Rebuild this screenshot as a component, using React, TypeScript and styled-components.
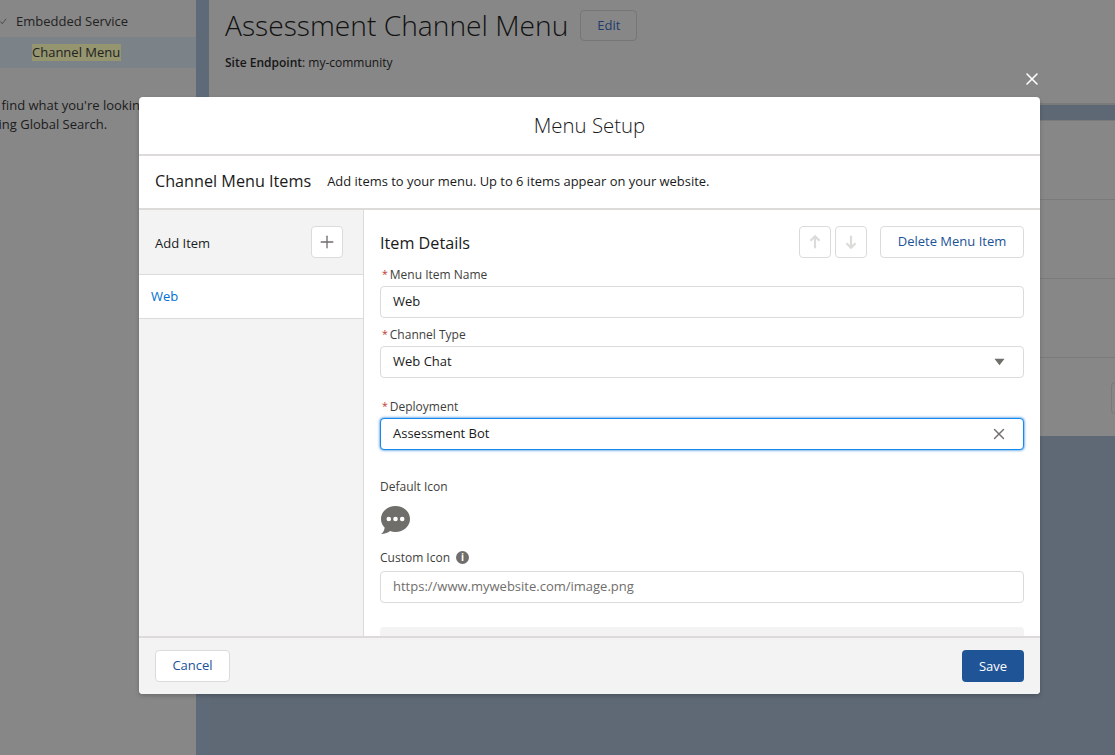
import React from 'react';
import styled, { createGlobalStyle } from 'styled-components';
import { X, Plus } from 'lucide-react';

const GlobalStyle = createGlobalStyle`
  html, body {
    margin: 0;
    padding: 0;
    height: 100%;
    overflow: hidden;
    font-family: "Open Sans", "Noto Sans", "Liberation Sans", sans-serif;
  }
`;

const App = () => {
  return (
    <Page>
      <GlobalStyle />
      <Sidebar>
        <TreeRow>
          <Chevron viewBox="0 0 8 8">
            <path d="M0.5 4 L2.5 6.5 L7 1" fill="none" stroke="#333" strokeWidth="0.8" />
          </Chevron>
          Embedded Service
        </TreeRow>
        <TreeRowActive>
          <Highlight>Channel Menu</Highlight>
        </TreeRowActive>
        <SearchHint>
          Didn't find what you're looking for?
          <br />
          Try using Global Search.
        </SearchHint>
      </Sidebar>
      <Gutter />
      <Main>
        <MainHeader>
          <TitleRow>
            <Title>Assessment Channel Menu</Title>
            <EditButton>Edit</EditButton>
          </TitleRow>
          <Endpoint>
            <strong>Site Endpoint</strong>: my-community
          </Endpoint>
        </MainHeader>
        <Band />
        <BgRow />
        <BgRow />
        <BgRow />
        <BgRow $last>
          <GhostButton />
        </BgRow>
      </Main>

      <CloseButton aria-label="Close">
        <X size={20} strokeWidth={1.9} />
      </CloseButton>

      <Modal>
        <ModalHeader>Menu Setup</ModalHeader>
        <SubHeader>
          <SubTitle>Channel Menu Items</SubTitle>
          <SubText>Add items to your menu. Up to 6 items appear on your website.</SubText>
        </SubHeader>
        <ModalBody>
          <ItemList>
            <AddRow>
              <AddLabel>Add Item</AddLabel>
              <IconButton>
                <Plus size={20} color="#706e6b" strokeWidth={1.6} />
              </IconButton>
            </AddRow>
            <ItemRow>Web</ItemRow>
          </ItemList>
          <Details>
            <DetailsHead>
              <DetailsTitle>Item Details</DetailsTitle>
              <ArrowGroup>
                <IconButton disabled>
                  <Arrow viewBox="0 0 14 14">
                    <path d="M7 12.5 V2 M3 6 L7 2 L11 6" />
                  </Arrow>
                </IconButton>
                <IconButton disabled>
                  <Arrow viewBox="0 0 14 14">
                    <path d="M7 1.5 V12 M3 8 L7 12 L11 8" />
                  </Arrow>
                </IconButton>
              </ArrowGroup>
              <DeleteButton>Delete Menu Item</DeleteButton>
            </DetailsHead>

            <Field $top={6}>
              <Label>
                <Req>*</Req>Menu Item Name
              </Label>
              <InputBox>Web</InputBox>
            </Field>
            <Field $top={6}>
              <Label>
                <Req>*</Req>Channel Type
              </Label>
              <InputBox>
                Web Chat
                <Caret viewBox="0 0 12 8">
                  <path d="M0.5 0.5 H11.5 L6 7.5 Z" fill="#706e6b" />
                </Caret>
              </InputBox>
            </Field>
            <Field $top={18}>
              <Label>
                <Req>*</Req>Deployment
              </Label>
              <InputBox $focus>
                Assessment Bot
                <ClearIcon size={18} color="#706e6b" strokeWidth={1.9} />
              </InputBox>
            </Field>

            <Field $top={26}>
              <Label>Default Icon</Label>
              <ChatIcon viewBox="0 0 31 30">
                <path
                  d="M15.5 1 C7.5 1 1 6.8 1 14 C1 17.3 2.4 20.3 4.6 22.6 C4.6 25 3.4 27.6 1 29 C5 29 8 27.8 10 26.1 C11.7 26.7 13.6 27 15.5 27 C23.5 27 30 21.2 30 14 C30 6.8 23.5 1 15.5 1 Z"
                  fill="#706e6b"
                />
                <circle cx="8.8" cy="14" r="2.3" fill="#fff" />
                <circle cx="15.5" cy="14" r="2.3" fill="#fff" />
                <circle cx="22.2" cy="14" r="2.3" fill="#fff" />
              </ChatIcon>
            </Field>
            <Field $top={12}>
              <IconLabel>
                Custom Icon
                <InfoBadge>i</InfoBadge>
              </IconLabel>
              <InputBox $placeholder>https://www.mywebsite.com/image.png</InputBox>
            </Field>
            <GrayPanel />
          </Details>
        </ModalBody>
        <ModalFooter>
          <CancelButton>Cancel</CancelButton>
          <SaveButton>Save</SaveButton>
        </ModalFooter>
      </Modal>
    </Page>
  );
};

const Page = styled.div`
  position: relative;
  width: 1115px;
  height: 755px;
  display: flex;
  overflow: hidden;
  background: #5f6875;
  color: #1c1c1c;
  font-size: 13px;
`;

const Sidebar = styled.div`
  width: 196px;
  flex: none;
  padding-top: 7px;
  background: #878787;
  overflow: hidden;
`;

const TreeRow = styled.div`
  height: 30px;
  padding-bottom: 2px;
  box-sizing: border-box;
  display: flex;
  align-items: center;
  padding-left: 16px;
  position: relative;
  color: #222;
`;

const Chevron = styled.svg`
  position: absolute;
  left: 0;
  top: 11px;
  width: 7px;
  height: 7px;
`;

const TreeRowActive = styled.div`
  height: 31px;
  display: flex;
  align-items: center;
  padding-left: 32px;
  background: #7b8389;
  color: #222;
`;

const Highlight = styled.span`
  background: #95956f;
  padding-right: 1px;
  line-height: 17px;
`;

const SearchHint = styled.p`
  margin: 28px 0 0 -38px;
  width: 260px;
  line-height: 19px;
  color: #1c1c1c;
`;

const Gutter = styled.div`
  width: 13px;
  flex: none;
  background: #5f6a78;
`;

const Main = styled.div`
  flex: 1;
  min-width: 0;
`;

const MainHeader = styled.div`
  height: 105px;
  padding: 10px 0 0 16px;
  box-sizing: border-box;
  background: #878787;
  border-bottom: 2px solid #7a7a7a;
`;

const TitleRow = styled.div`
  display: flex;
  align-items: center;
  gap: 12px;
  height: 31px;
`;

const Title = styled.h1`
  margin: -2px 0 0;
  font-size: 28.2px;
  font-weight: 300;
  color: #111;
  white-space: nowrap;
`;

const EditButton = styled.div`
  width: 57px;
  height: 31px;
  box-sizing: border-box;
  display: flex;
  align-items: center;
  justify-content: center;
  padding-bottom: 2px;
  border: 1px solid #767676;
  border-radius: 4px;
  color: #1d3d6b;
  background: #878787;
`;

const Endpoint = styled.div`
  margin-top: 13px;
  font-size: 12px;
  color: #161616;
  strong {
    font-weight: 600;
  }
`;

const Band = styled.div`
  height: 15px;
  background: #5e6874;
  border-bottom: 1px solid #7a7a7a;
`;

const BgRow = styled.div<{ $last?: boolean }>`
  height: 78px;
  background: #878787;
  border-bottom: 1px solid ${(p) => (p.$last ? '#5f6875' : '#7a7a7a')};
  display: flex;
  justify-content: flex-end;
  align-items: flex-start;
`;

const GhostButton = styled.div`
  width: 30px;
  height: 30px;
  margin: 24px -28px 0 0;
  border: 1px solid #7a7a7a;
  border-radius: 4px;
`;

const CloseButton = styled.div`
  position: absolute;
  left: 1022px;
  top: 69px;
  width: 20px;
  height: 20px;
  color: #fff;
  display: flex;
`;

const Modal = styled.div`
  position: absolute;
  left: 139px;
  top: 97px;
  width: 901px;
  height: 597px;
  display: flex;
  flex-direction: column;
  background: #fff;
  border-radius: 4px;
  overflow: hidden;
  box-shadow: 0 2px 4px rgba(0, 0, 0, 0.2);
`;

const ModalHeader = styled.div`
  height: 55px;
  padding-bottom: 2px;
  flex: none;
  display: flex;
  align-items: center;
  justify-content: center;
  border-bottom: 2px solid #dddbda;
  font-size: 20.4px;
  font-weight: 300;
  color: #1a1a1a;
`;

const SubHeader = styled.div`
  height: 50px;
  padding: 0 0 2px 16px;
  flex: none;
  display: flex;
  align-items: center;
  gap: 16px;
  border-bottom: 2px solid #dddbda;
`;

const SubTitle = styled.span`
  font-size: 16.2px;
  color: #1a1a1a;
`;

const SubText = styled.span`
  font-size: 12.95px;
  color: #1a1a1a;
`;

const ModalBody = styled.div`
  flex: 1;
  min-height: 0;
  display: flex;
  overflow: hidden;
`;

const ItemList = styled.div`
  width: 225px;
  flex: none;
  box-sizing: border-box;
  background: #f3f3f3;
  border-right: 1px solid #dddbda;
`;

const AddRow = styled.div`
  height: 65px;
  box-sizing: border-box;
  display: flex;
  align-items: center;
  justify-content: space-between;
  padding: 0 20px 0 16px;
  border-bottom: 1px solid #dddbda;
`;

const AddLabel = styled.span`
  padding-top: 2px;
`;

const ItemRow = styled.div`
  height: 44px;
  box-sizing: border-box;
  display: flex;
  align-items: center;
  padding: 0 0 2px 12px;
  background: #fff;
  border-bottom: 1px solid #dddbda;
  color: #0070d2;
`;

const IconButton = styled.button`
  width: 32px;
  height: 32px;
  padding: 0;
  display: flex;
  align-items: center;
  justify-content: center;
  background: #fff;
  border: 1px solid #dddbda;
  border-radius: 4px;
`;

const Arrow = styled.svg`
  width: 16px;
  height: 16px;
  fill: none;
  stroke: #dddbda;
  stroke-width: 1.9;
`;

const Details = styled.div`
  flex: 1;
  min-width: 0;
  padding: 16px 16px 0;
`;

const DetailsHead = styled.div`
  display: flex;
  align-items: center;
  height: 32px;
`;

const DetailsTitle = styled.div`
  flex: 1;
  padding-top: 2px;
  font-size: 16.2px;
  color: #1a1a1a;
`;

const ArrowGroup = styled.div`
  display: flex;
  gap: 4px;
  margin-right: 13px;
`;

const DeleteButton = styled.div`
  width: 144px;
  height: 32px;
  box-sizing: border-box;
  display: flex;
  align-items: center;
  justify-content: center;
  padding-bottom: 2px;
  border: 1px solid #dddbda;
  border-radius: 4px;
  color: #1b5297;
`;

const Field = styled.div<{ $top: number }>`
  margin-top: ${(p) => p.$top}px;
`;

const Label = styled.div`
  height: 20px;
  margin-bottom: 2px;
  display: flex;
  align-items: center;
  font-size: 12px;
  color: #3e3e3c;
`;

const IconLabel = styled(Label)`
  gap: 6px;
  margin-bottom: 4px;
`;

const Req = styled.span`
  color: #c23934;
  font-size: 10.5px;
  margin: 0 2px 0 2px;
`;

const InputBox = styled.div<{ $focus?: boolean; $placeholder?: boolean }>`
  height: 32px;
  box-sizing: border-box;
  display: flex;
  align-items: center;
  justify-content: space-between;
  padding: 0 15px 2px 12px;
  background: #fff;
  border: 1px solid ${(p) => (p.$focus ? '#1589ee' : '#dddbda')};
  border-radius: 4px;
  box-shadow: ${(p) => (p.$focus ? '0 0 3px #0070d2' : 'none')};
  color: ${(p) => (p.$placeholder ? '#706e6b' : '#1a1a1a')};
`;

const ClearIcon = styled(X)`
  margin-top: 2px;
`;

const Caret = styled.svg`
  width: 11px;
  height: 8px;
  margin: 2px 3px 0 0;
`;

const ChatIcon = styled.svg`
  display: block;
  width: 31px;
  height: 30px;
  margin-top: 9px;
`;

const InfoBadge = styled.span`
  width: 13px;
  height: 13px;
  border-radius: 50%;
  background: #706e6b;
  color: #fff;
  font-size: 10px;
  font-weight: 700;
  line-height: 13px;
  text-align: center;
`;

const GrayPanel = styled.div`
  height: 60px;
  margin-top: 24px;
  background: #f3f3f3;
  border-radius: 4px 4px 0 0;
`;

const ModalFooter = styled.div`
  height: 58px;
  flex: none;
  box-sizing: border-box;
  display: flex;
  align-items: center;
  justify-content: space-between;
  padding: 0 16px;
  background: #f3f3f3;
  border-top: 2px solid #dddbda;
`;

const CancelButton = styled.div`
  width: 75px;
  height: 32px;
  box-sizing: border-box;
  display: flex;
  align-items: center;
  justify-content: center;
  padding-bottom: 2px;
  background: #fff;
  border: 1px solid #dddbda;
  border-radius: 4px;
  color: #1b5297;
`;

const SaveButton = styled.div`
  width: 62px;
  height: 32px;
  display: flex;
  align-items: center;
  justify-content: center;
  background: #1f5497;
  border-radius: 4px;
  color: #fff;
`;

export default App;
